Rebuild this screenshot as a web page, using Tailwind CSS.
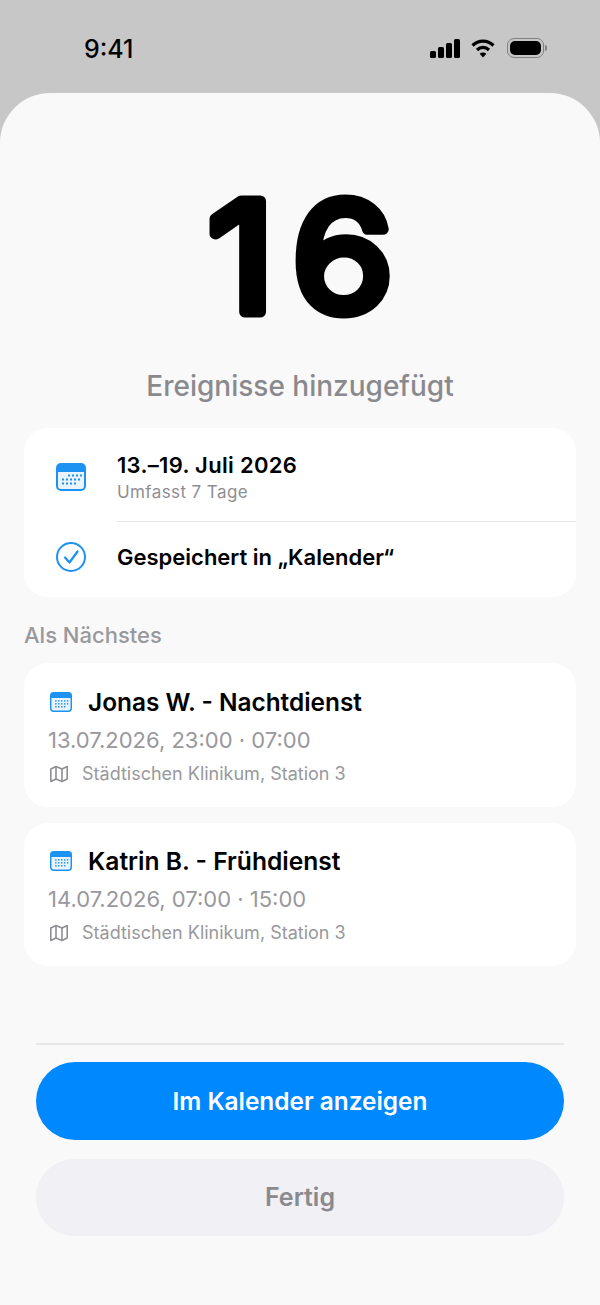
<!DOCTYPE html>
<html lang="de">
<head>
    <meta charset="UTF-8">
    <meta name="viewport" content="width=device-width, initial-scale=1.0">
    <title>Ereignisse hinzugefügt</title>
    <script src="https://cdn.jsdelivr.net/npm/@tailwindcss/browser@4"></script>
</head>
<body class="bg-[#c7c7c7] font-[Inter,sans-serif] text-black">
    <div class="w-[600px] h-[1305px] overflow-hidden flex flex-col">
        <!-- status bar -->
        <div class="h-[93px] shrink-0 flex justify-between pl-[84px] pr-[53px] pt-[33px]">
            <span class="text-[25px] leading-[32px] font-medium">9:41</span>
            <div class="flex items-center gap-[11px] h-[30px]">
                <svg width="30" height="19" viewBox="0 0 30 19" fill="#000">
                    <rect x="0" y="12" width="6" height="7" rx="1.5"/>
                    <rect x="8" y="8" width="6" height="11" rx="1.5"/>
                    <rect x="16" y="4" width="6" height="15" rx="1.5"/>
                    <rect x="24" y="0" width="6" height="19" rx="1.5"/>
                </svg>
                <svg width="24" height="20" viewBox="0 0 24 20" fill="none" stroke="#000" stroke-width="3.2">
                    <path d="M1.5 7.5C7.5 1.6 16.5 1.6 22.5 7.5"/>
                    <path d="M6 12C9.5 8.6 14.5 8.6 18 12"/>
                    <path d="M12 19.5L8.6 15.8C10.6 14.2 13.4 14.2 15.4 15.8Z" fill="#000" stroke="none"/>
                </svg>
                <div class="flex items-center ml-[1px]">
                    <div class="w-[37px] h-[20px] rounded-[7px] border border-[#808080] p-[2px]">
                        <div class="w-full h-full rounded-[5px] bg-black"></div>
                    </div>
                    <div class="w-[2px] h-[6px] rounded-r-full bg-[#808080] ml-[1px]"></div>
                </div>
            </div>
        </div>

        <!-- sheet -->
        <div class="flex-1 bg-[#f9f9f9] rounded-t-[50px] flex flex-col">
            <svg class="mt-[65px] mx-auto shrink-0" width="240" height="196" viewBox="0 0 240 196">
                <text transform="translate(120 0) scale(1.08 1)" x="8.5" y="154" text-anchor="middle" letter-spacing="16" font-family="Inter" font-weight="400" font-size="152" fill="#000" stroke="#000" stroke-width="11" stroke-linejoin="round" stroke-linecap="round">16</text>
            </svg>
            <h1 class="mt-[15px] text-center text-[28px] leading-[34px] font-medium text-[#8a8a8e]">Ereignisse hinzugefügt</h1>

            <div class="mt-[25px] mx-[24px] h-[169px] bg-white rounded-[24px] flex flex-col">
                <div class="h-[93px] pt-[4px] flex items-center shrink-0">
                    <div class="w-[93px] flex justify-center shrink-0">
                        <svg width="30" height="28" viewBox="0 0 30 28">
                            <rect x="1" y="1" width="28" height="26" rx="4" fill="#eaf4ff" stroke="#1c92f2" stroke-width="2"/>
                            <path d="M1 5a4 4 0 0 1 4-4h20a4 4 0 0 1 4 4v4H1z" fill="#1c92f2"/>
                            <g fill="#1c92f2">
                                <rect x="12" y="11.5" width="2" height="2"/><rect x="16" y="11.5" width="2" height="2"/><rect x="20" y="11.5" width="2" height="2"/><rect x="24" y="11.5" width="2" height="2"/>
                                <rect x="6" y="15.5" width="2" height="2"/><rect x="10" y="15.5" width="2" height="2"/><rect x="14" y="15.5" width="2" height="2"/><rect x="18" y="15.5" width="2" height="2"/><rect x="22" y="15.5" width="2" height="2"/>
                                <rect x="6" y="19.5" width="2" height="2"/><rect x="10" y="19.5" width="2" height="2"/><rect x="14" y="19.5" width="2" height="2"/><rect x="18" y="19.5" width="2" height="2"/>
                            </g>
                        </svg>
                    </div>
                    <div class="flex flex-col mt-[2px]">
                        <span class="text-[22px] leading-[28px] tracking-[0.3px] font-semibold">13.–19. Juli 2026</span>
                        <span class="mt-[1px] text-[17px] leading-[24px] tracking-[0.4px] text-[#8e8e93]">Umfasst 7 Tage</span>
                    </div>
                </div>
                <div class="ml-[93px] h-[1px] bg-[#e5e5e7] shrink-0"></div>
                <div class="flex-1 flex items-center pb-[6px]">
                    <div class="w-[93px] flex justify-center shrink-0">
                        <svg width="30" height="30" viewBox="0 0 30 30" fill="none" stroke="#1c92f2">
                            <circle cx="15" cy="15" r="14" stroke-width="2"/>
                            <path d="M9 15.5l4.5 5L21.5 9.5" stroke-width="2.2" stroke-linecap="round" stroke-linejoin="round"/>
                        </svg>
                    </div>
                    <span class="text-[22px] leading-[28px] font-semibold">Gespeichert in „Kalender“</span>
                </div>
            </div>

            <h2 class="mt-[25px] ml-[24px] text-[22px] leading-[26px] font-medium text-[#98989d]">Als Nächstes</h2>

            <div class="mt-[15px] mx-[24px] flex flex-col gap-[16px]">
                <div class="h-[144px] bg-white rounded-[24px] pl-[26px] pt-[23px] flex flex-col">
                    <div class="flex items-center gap-[16px] h-[32px]">
                        <svg width="22" height="20" viewBox="0 0 30 27">
                            <rect x="1" y="1" width="28" height="25" rx="4" fill="#eaf4ff" stroke="#1c92f2" stroke-width="2"/>
                            <path d="M1 5a4 4 0 0 1 4-4h20a4 4 0 0 1 4 4v3H1z" fill="#1c92f2"/>
                            <g fill="#1c92f2">
                                <rect x="7" y="11" width="2" height="2"/><rect x="11" y="11" width="2" height="2"/><rect x="15" y="11" width="2" height="2"/><rect x="19" y="11" width="2" height="2"/><rect x="23" y="11" width="2" height="2"/>
                                <rect x="7" y="15" width="2" height="2"/><rect x="11" y="15" width="2" height="2"/><rect x="15" y="15" width="2" height="2"/><rect x="19" y="15" width="2" height="2"/><rect x="23" y="15" width="2" height="2"/>
                                <rect x="7" y="19" width="2" height="2"/><rect x="11" y="19" width="2" height="2"/><rect x="15" y="19" width="2" height="2"/><rect x="19" y="19" width="2" height="2"/>
                            </g>
                        </svg>
                        <span class="text-[24.4px] leading-[32px] font-semibold">Jonas W. - Nachtdienst</span>
                    </div>
                    <span class="-ml-[2px] mt-[7px] text-[22px] leading-[30px] text-[#98989d]">13.07.2026, 23:00 · 07:00</span>
                    <div class="mt-[7px] flex items-center gap-[14px] h-[24px]">
                        <svg width="18" height="18" viewBox="1 0.5 18 17" fill="none" stroke="#8e8e93" stroke-width="1.6" stroke-linejoin="round">
                            <path d="M1.8 4L7 1.5L13 4L18.2 1.5V14L13 16.5L7 14L1.8 16.5Z"/>
                            <path d="M7 1.5V14M13 4V16.5"/>
                        </svg>
                        <span class="text-[18px] leading-[24px] text-[#98989d]">Städtischen Klinikum, Station 3</span>
                    </div>
                </div>

                <div class="h-[143px] bg-white rounded-[24px] pl-[26px] pt-[22px] flex flex-col">
                    <div class="flex items-center gap-[16px] h-[32px]">
                        <svg width="22" height="20" viewBox="0 0 30 27">
                            <rect x="1" y="1" width="28" height="25" rx="4" fill="#eaf4ff" stroke="#1c92f2" stroke-width="2"/>
                            <path d="M1 5a4 4 0 0 1 4-4h20a4 4 0 0 1 4 4v3H1z" fill="#1c92f2"/>
                            <g fill="#1c92f2">
                                <rect x="7" y="11" width="2" height="2"/><rect x="11" y="11" width="2" height="2"/><rect x="15" y="11" width="2" height="2"/><rect x="19" y="11" width="2" height="2"/><rect x="23" y="11" width="2" height="2"/>
                                <rect x="7" y="15" width="2" height="2"/><rect x="11" y="15" width="2" height="2"/><rect x="15" y="15" width="2" height="2"/><rect x="19" y="15" width="2" height="2"/><rect x="23" y="15" width="2" height="2"/>
                                <rect x="7" y="19" width="2" height="2"/><rect x="11" y="19" width="2" height="2"/><rect x="15" y="19" width="2" height="2"/><rect x="19" y="19" width="2" height="2"/>
                            </g>
                        </svg>
                        <span class="text-[24.6px] leading-[32px] font-semibold">Katrin B. - Frühdienst</span>
                    </div>
                    <span class="-ml-[2px] mt-[7px] text-[22px] leading-[30px] text-[#98989d]">14.07.2026, 07:00 · 15:00</span>
                    <div class="mt-[7px] flex items-center gap-[14px] h-[24px]">
                        <svg width="18" height="18" viewBox="1 0.5 18 17" fill="none" stroke="#8e8e93" stroke-width="1.6" stroke-linejoin="round">
                            <path d="M1.8 4L7 1.5L13 4L18.2 1.5V14L13 16.5L7 14L1.8 16.5Z"/>
                            <path d="M7 1.5V14M13 4V16.5"/>
                        </svg>
                        <span class="text-[18px] leading-[24px] text-[#98989d]">Städtischen Klinikum, Station 3</span>
                    </div>
                </div>
            </div>

            <!-- bottom actions -->
            <div class="mt-[77px] mx-[36px] border-t-2 border-[#e6e6e8] pt-[17px] flex flex-col gap-[19px]">
                <button class="h-[78px] rounded-full bg-[#0088ff] text-white text-[24.4px] font-semibold">Im Kalender anzeigen</button>
                <button class="h-[77px] rounded-full bg-[#f0f0f5] text-[#8a8a8e] text-[25px] font-semibold">Fertig</button>
            </div>
        </div>
    </div>
</body>
</html>
